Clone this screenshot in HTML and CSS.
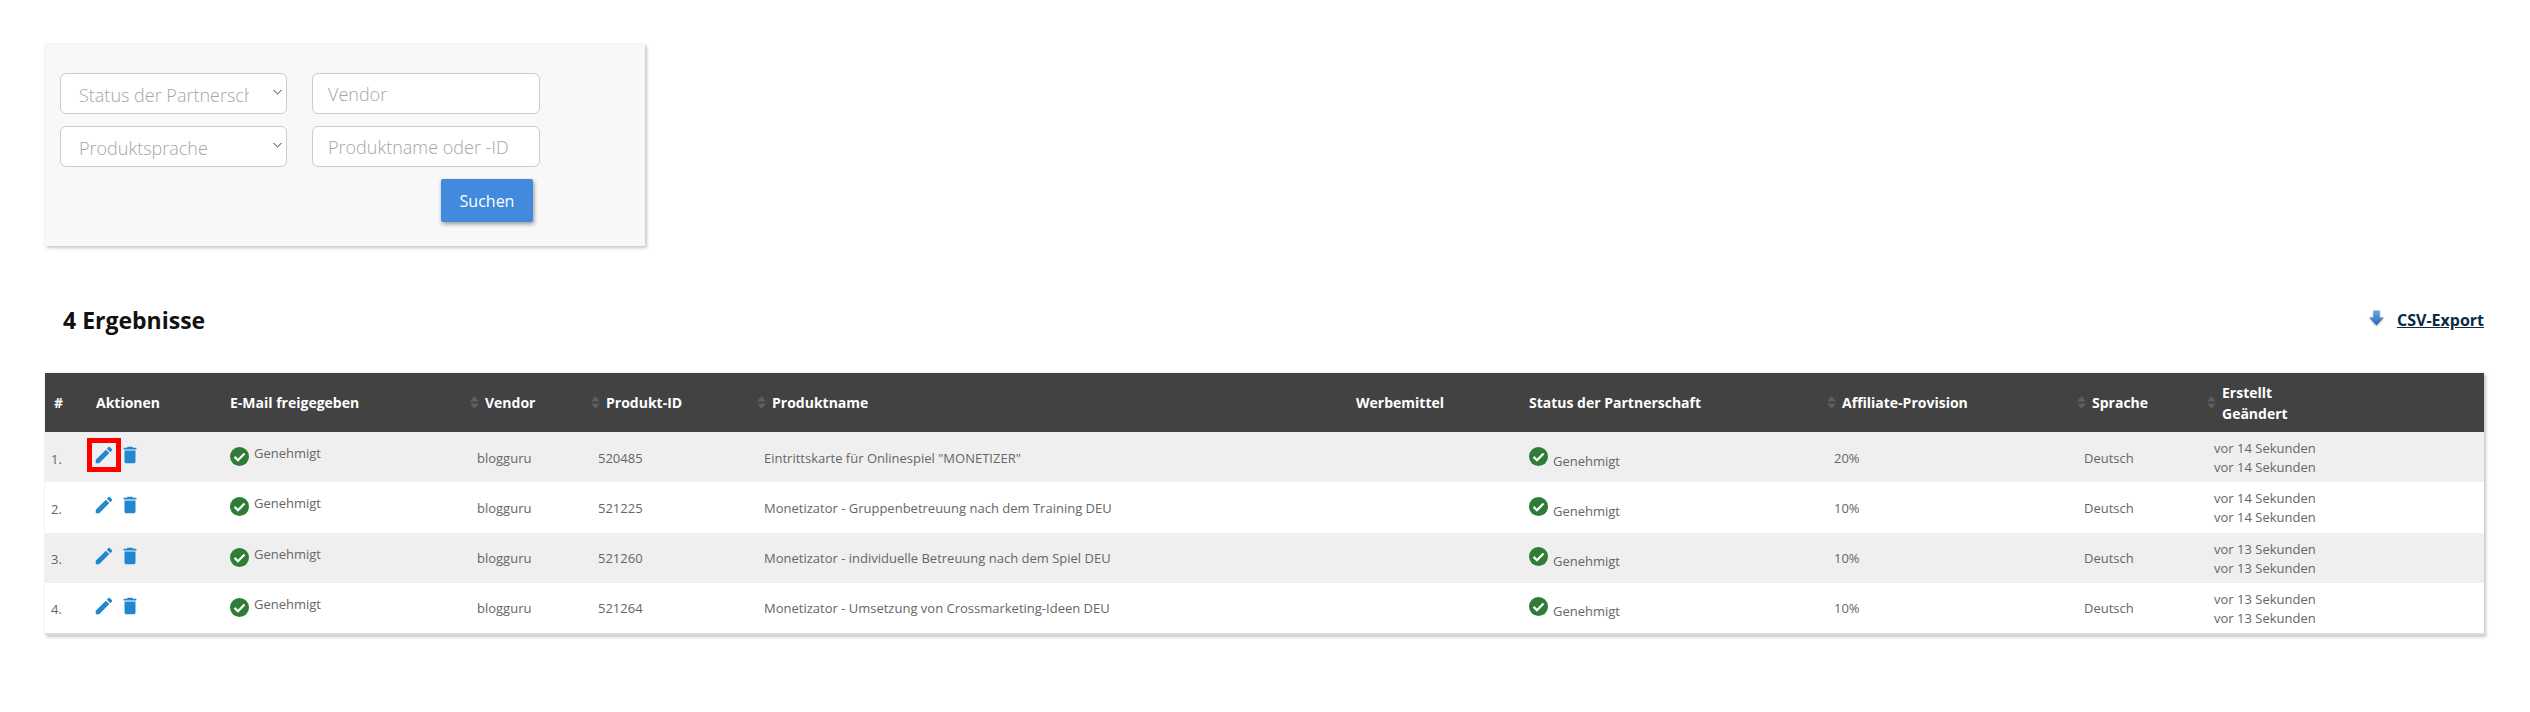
FILE: index.html
```html
<!DOCTYPE html>
<html lang="de">
<head>
    <meta charset="UTF-8">
    <title>Partnerschaften</title>
    <link rel="stylesheet" href="styles.css">
</head>
<body>
    <!-- icon set -->
    <svg class="icon-defs" aria-hidden="true">
        <symbol id="i-edit" viewBox="0 0 24 24"><path d="M3 17.25V21h3.75L17.81 9.94l-3.75-3.75L3 17.25zM20.71 7.04a1 1 0 0 0 0-1.41l-2.34-2.34a1 1 0 0 0-1.41 0l-1.83 1.83 3.75 3.75 1.83-1.83z"/></symbol>
        <symbol id="i-trash" viewBox="0 0 24 24"><path d="M6 19c0 1.1.9 2 2 2h8c1.1 0 2-.9 2-2V7H6v12zM19 4h-3.5l-1-1h-5l-1 1H5v2h14V4z"/></symbol>
        <symbol id="i-check" viewBox="0 0 20 20"><circle cx="10" cy="10" r="10" fill="#2e7d36"/><path d="M4.8 10.4l3.6 3.5 6.9-7" fill="none" stroke="#fff" stroke-width="2.4"/></symbol>
        <symbol id="i-sort" viewBox="0 0 9 13"><path d="M4.5 0L9 5.6H0zM4.5 13L0 7.4h9z"/></symbol>
    </svg>

    <form class="search-panel">
        <select class="search-field search-select"><option>Status der Partnerschaft</option></select>
        <input class="search-field search-input" type="text" placeholder="Vendor">
        <select class="search-field search-select"><option>Produktsprache</option></select>
        <input class="search-field search-input" type="text" placeholder="Produktname oder -ID">
        <button class="search-button" type="button">Suchen</button>
    </form>

    <div class="results-head">
        <h2 class="results-title">4 Ergebnisse</h2>
        <a class="csv-link" href="#">
            <svg class="csv-icon" viewBox="0 0 16 17">
                <defs>
                    <linearGradient id="csv-grad" x1="0" y1="0" x2="0" y2="1">
                        <stop offset="0" stop-color="#6aa9e6"/>
                        <stop offset="1" stop-color="#2468b4"/>
                    </linearGradient>
                </defs>
                <path d="M4.5 0h7v7.5H16L8 16 0 7.5h4.5z" fill="url(#csv-grad)"/>
            </svg>
            <span class="csv-text">CSV-Export</span>
        </a>
    </div>

    <div class="table-wrap">
        <table class="results-table">
            <colgroup>
                <col class="col-num"><col class="col-actions"><col class="col-mail"><col class="col-vendor">
                <col class="col-id"><col class="col-name"><col class="col-media"><col class="col-status">
                <col class="col-provision"><col class="col-lang"><col class="col-date">
            </colgroup>
            <thead>
                <tr>
                    <th class="th-num">#</th>
                    <th>Aktionen</th>
                    <th>E-Mail freigegeben</th>
                    <th class="th-sort"><div class="th-inner"><svg class="sort-icon"><use href="#i-sort"/></svg><span>Vendor</span></div></th>
                    <th class="th-sort"><div class="th-inner"><svg class="sort-icon"><use href="#i-sort"/></svg><span>Produkt-ID</span></div></th>
                    <th class="th-sort"><div class="th-inner"><svg class="sort-icon"><use href="#i-sort"/></svg><span>Produktname</span></div></th>
                    <th>Werbemittel</th>
                    <th>Status der Partnerschaft</th>
                    <th class="th-sort"><div class="th-inner"><svg class="sort-icon"><use href="#i-sort"/></svg><span>Affiliate-Provision</span></div></th>
                    <th class="th-sort"><div class="th-inner"><svg class="sort-icon"><use href="#i-sort"/></svg><span>Sprache</span></div></th>
                    <th class="th-sort"><div class="th-inner"><svg class="sort-icon"><use href="#i-sort"/></svg><span>Erstellt<br>Geändert</span></div></th>
                </tr>
            </thead>
            <tbody>
                <tr>
                    <td class="td-num">1.</td>
                    <td><div class="actions"><a class="action-edit is-marked" href="#"><svg class="action-icon"><use href="#i-edit"/></svg></a><a class="action-trash" href="#"><svg class="action-icon"><use href="#i-trash"/></svg></a></div></td>
                    <td><div class="mail-ok"><svg class="check-icon"><use href="#i-check"/></svg><span>Genehmigt</span></div></td>
                    <td>blogguru</td>
                    <td>520485</td>
                    <td>Eintrittskarte für Onlinespiel "MONETIZER"</td>
                    <td></td>
                    <td><div class="status-ok"><svg class="check-icon"><use href="#i-check"/></svg><span>Genehmigt</span></div></td>
                    <td>20%</td>
                    <td>Deutsch</td>
                    <td>vor 14 Sekunden<br>vor 14 Sekunden</td>
                </tr>
                <tr>
                    <td class="td-num">2.</td>
                    <td><div class="actions"><a class="action-edit" href="#"><svg class="action-icon"><use href="#i-edit"/></svg></a><a class="action-trash" href="#"><svg class="action-icon"><use href="#i-trash"/></svg></a></div></td>
                    <td><div class="mail-ok"><svg class="check-icon"><use href="#i-check"/></svg><span>Genehmigt</span></div></td>
                    <td>blogguru</td>
                    <td>521225</td>
                    <td>Monetizator - Gruppenbetreuung nach dem Training DEU</td>
                    <td></td>
                    <td><div class="status-ok"><svg class="check-icon"><use href="#i-check"/></svg><span>Genehmigt</span></div></td>
                    <td>10%</td>
                    <td>Deutsch</td>
                    <td>vor 14 Sekunden<br>vor 14 Sekunden</td>
                </tr>
                <tr>
                    <td class="td-num">3.</td>
                    <td><div class="actions"><a class="action-edit" href="#"><svg class="action-icon"><use href="#i-edit"/></svg></a><a class="action-trash" href="#"><svg class="action-icon"><use href="#i-trash"/></svg></a></div></td>
                    <td><div class="mail-ok"><svg class="check-icon"><use href="#i-check"/></svg><span>Genehmigt</span></div></td>
                    <td>blogguru</td>
                    <td>521260</td>
                    <td>Monetizator - individuelle Betreuung nach dem Spiel DEU</td>
                    <td></td>
                    <td><div class="status-ok"><svg class="check-icon"><use href="#i-check"/></svg><span>Genehmigt</span></div></td>
                    <td>10%</td>
                    <td>Deutsch</td>
                    <td>vor 13 Sekunden<br>vor 13 Sekunden</td>
                </tr>
                <tr>
                    <td class="td-num">4.</td>
                    <td><div class="actions"><a class="action-edit" href="#"><svg class="action-icon"><use href="#i-edit"/></svg></a><a class="action-trash" href="#"><svg class="action-icon"><use href="#i-trash"/></svg></a></div></td>
                    <td><div class="mail-ok"><svg class="check-icon"><use href="#i-check"/></svg><span>Genehmigt</span></div></td>
                    <td>blogguru</td>
                    <td>521264</td>
                    <td>Monetizator - Umsetzung von Crossmarketing-Ideen DEU</td>
                    <td></td>
                    <td><div class="status-ok"><svg class="check-icon"><use href="#i-check"/></svg><span>Genehmigt</span></div></td>
                    <td>10%</td>
                    <td>Deutsch</td>
                    <td>vor 13 Sekunden<br>vor 13 Sekunden</td>
                </tr>
            </tbody>
        </table>
    </div>
</body>
</html>
```

FILE: styles.css
```css
* {
    box-sizing: border-box;
    font-family: 'Open Sans', 'Noto Sans', sans-serif;
}

body {
    margin: 0;
    padding: 44px 46px 40px 45px;
    background: #fff;
    color: #666;
}

.icon-defs {
    display: none;
}

/* search box */
.search-panel {
    display: grid;
    grid-template-columns: 227px 228px;
    grid-auto-rows: 41px;
    column-gap: 25px;
    row-gap: 12px;
    width: 600px;
    height: 202px;
    padding: 29px 15px;
    background: #f8f8f8;
    box-shadow: 2px 2px 3px #c8c8c8, 0 0 2px #e2e2e2;
}

.search-field {
    width: 100%;
    height: 41px;
    background-color: #fff;
    border: 1px solid #ccc;
    border-radius: 6px;
    color: #a8a4a4;
    font-size: 18px;
    font-weight: 300;
    outline: none;
}

.search-select {
    padding: 2px 37px 0 18px;
    appearance: none;
    background-image: linear-gradient(45deg, transparent 50%, #999 50%, #999 65%, transparent 65%),
        linear-gradient(-45deg, transparent 50%, #999 50%, #999 65%, transparent 65%);
    background-size: 5px 5px, 5px 5px;
    background-position: 212px 16px, 216px 16px;
    background-repeat: no-repeat;
}

.search-input {
    padding: 0 15px;
}

.search-input::placeholder {
    color: #a8a4a4;
}

.search-button {
    grid-column: 2;
    justify-self: end;
    width: 92px;
    height: 43px;
    margin: 0 7px 0 0;
    background: #418ade;
    border: 0;
    border-radius: 2px;
    box-shadow: 1px 2px 4px rgba(0, 0, 0, 0.4);
    color: #fff;
    font-size: 16px;
}

/* results */
.results-head {
    display: flex;
    align-items: center;
    justify-content: space-between;
    height: 40px;
    margin-top: 54px;
    padding-left: 18px;
}

.results-title {
    margin: 0;
    color: #111;
    font-size: 23px;
    font-weight: 700;
}

.csv-link {
    display: flex;
    align-items: center;
    gap: 13px;
    color: #0c2a45;
    font-size: 16px;
    font-weight: 700;
}

.csv-icon {
    width: 15px;
    height: 17px;
    margin-top: -4px;
    filter: drop-shadow(0 1px 1px rgba(0, 0, 0, 0.25));
}

.csv-text {
    text-decoration: underline;
}

.table-wrap {
    width: 2439px;
    margin-top: 33px;
    border-bottom: 2px solid #dcdcdc;
    box-shadow: 2px 2px 3px #c8c8c8, 0 0 2px #e2e2e2;
}

.results-table {
    width: 100%;
    border-collapse: collapse;
    table-layout: fixed;
    font-size: 13px;
}

.col-num { width: 45px; }
.col-actions { width: 134px; }
.col-mail { width: 247px; }
.col-vendor { width: 121px; }
.col-id { width: 166px; }
.col-name { width: 592px; }
.col-media { width: 173px; }
.col-status { width: 305px; }
.col-provision { width: 250px; }
.col-lang { width: 130px; }
.col-date { width: 276px; }

.results-table th {
    height: 59px;
    padding: 0 0 0 6px;
    background: #424242;
    color: #fff;
    font-size: 14px;
    font-weight: 700;
    line-height: 21px;
    text-align: left;
}

.results-table th.th-num {
    padding-left: 9px;
}

.results-table th.th-sort {
    padding-left: 0;
}

.th-inner {
    display: flex;
    align-items: center;
    gap: 6px;
    margin-left: -1px;
}

.sort-icon {
    flex: none;
    width: 9px;
    height: 13px;
    fill: #5e5e5e;
}

.results-table td {
    height: 50.25px;
    padding: 2px 0 0 6px;
    line-height: 19px;
}

.results-table tbody tr:nth-child(odd) td {
    background: #efefef;
}

.results-table td.td-num {
    padding-top: 4px;
}

.actions {
    display: flex;
    align-items: center;
    gap: 6px;
    margin-top: -6px;
}

.action-edit,
.action-trash {
    display: flex;
    color: #2187d0;
}

.action-icon {
    width: 22px;
    height: 22px;
    fill: currentColor;
}

.action-edit {
    margin-left: -3px;
}

.action-trash {
    margin-left: -2px;
}

.is-marked {
    outline: 5px solid #f00;
    outline-offset: 1px;
}

.mail-ok,
.status-ok {
    display: flex;
    gap: 5px;
}

.mail-ok {
    align-items: flex-start;
    margin-top: -3px;
}

.mail-ok span {
    margin-top: -3px;
}

.status-ok {
    align-items: flex-end;
    margin-top: -4px;
}

.status-ok span {
    margin-bottom: -5px;
}

.check-icon {
    flex: none;
    width: 19px;
    height: 19px;
}
```
